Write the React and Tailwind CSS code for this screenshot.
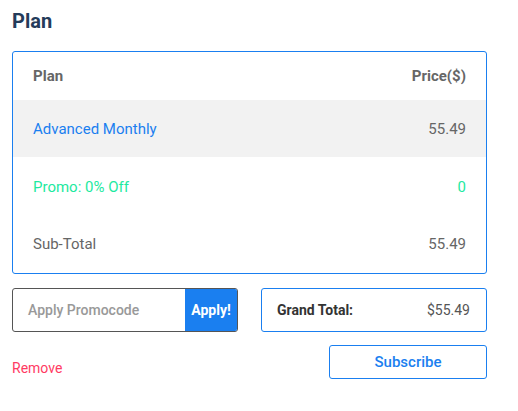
export default function App() {
  return (
    <div className="w-[518px] h-[411px] bg-white px-[12px] pt-[8px] font-['Roboto',sans-serif]">
      <h1 className="text-[20px] leading-[26px] font-bold text-[#243b5a]">Plan</h1>
      <div className="mt-[17px] w-[475px] border border-[#1a7ff0] rounded-[3px] overflow-hidden">
        <div className="h-[48px] flex items-center justify-between px-[20px] text-[15px] font-bold text-[#666666]">
          <span>Plan</span>
          <span>Price($)</span>
        </div>
        <div className="h-[57px] pt-[2px] flex items-center justify-between px-[20px] text-[15px] bg-[#f2f2f2]">
          <span className="text-[#1a7ff0]">Advanced Monthly</span>
          <span className="text-[#666666]">55.49</span>
        </div>
        <div className="h-[57px] pt-[3px] flex items-center justify-between px-[20px] text-[15px] text-[#1de9a0]">
          <span>Promo: 0% Off</span>
          <span>0</span>
        </div>
        <div className="h-[59px] pt-[2px] flex items-center justify-between px-[20px] text-[15px] text-[#666666]">
          <span>Sub-Total</span>
          <span>55.49</span>
        </div>
      </div>
      <div className="mt-[14px] w-[475px] grid grid-cols-2 gap-[23px]">
        <div className="h-[44px] flex border border-[#555555] rounded-[3px] overflow-hidden">
          <div className="flex-1 flex items-center pl-[15px] text-[14px] font-medium text-[#999999]">Apply Promocode</div>
          <button className="w-[52px] bg-[#1a7ff0] text-white text-[14px] font-bold flex items-center justify-center">Apply!</button>
        </div>
        <div className="h-[44px] flex items-center justify-between border border-[#1a7ff0] rounded-[3px] pl-[15px] pr-[16px]">
          <span className="text-[14px] font-bold text-[#333333]">Grand Total:</span>
          <span className="text-[14px] text-[#555555]">$55.49</span>
        </div>
      </div>
      <div className="mt-[13px] w-[475px] flex items-start justify-between">
        <span className="text-[14px] text-[#ff3b63] mt-[13px]">Remove</span>
        <button className="w-[158px] h-[34px] border border-[#1a7ff0] rounded-[3px] text-[15px] font-medium text-[#1a7ff0] flex items-center justify-center">Subscribe</button>
      </div>
    </div>
  );
}
